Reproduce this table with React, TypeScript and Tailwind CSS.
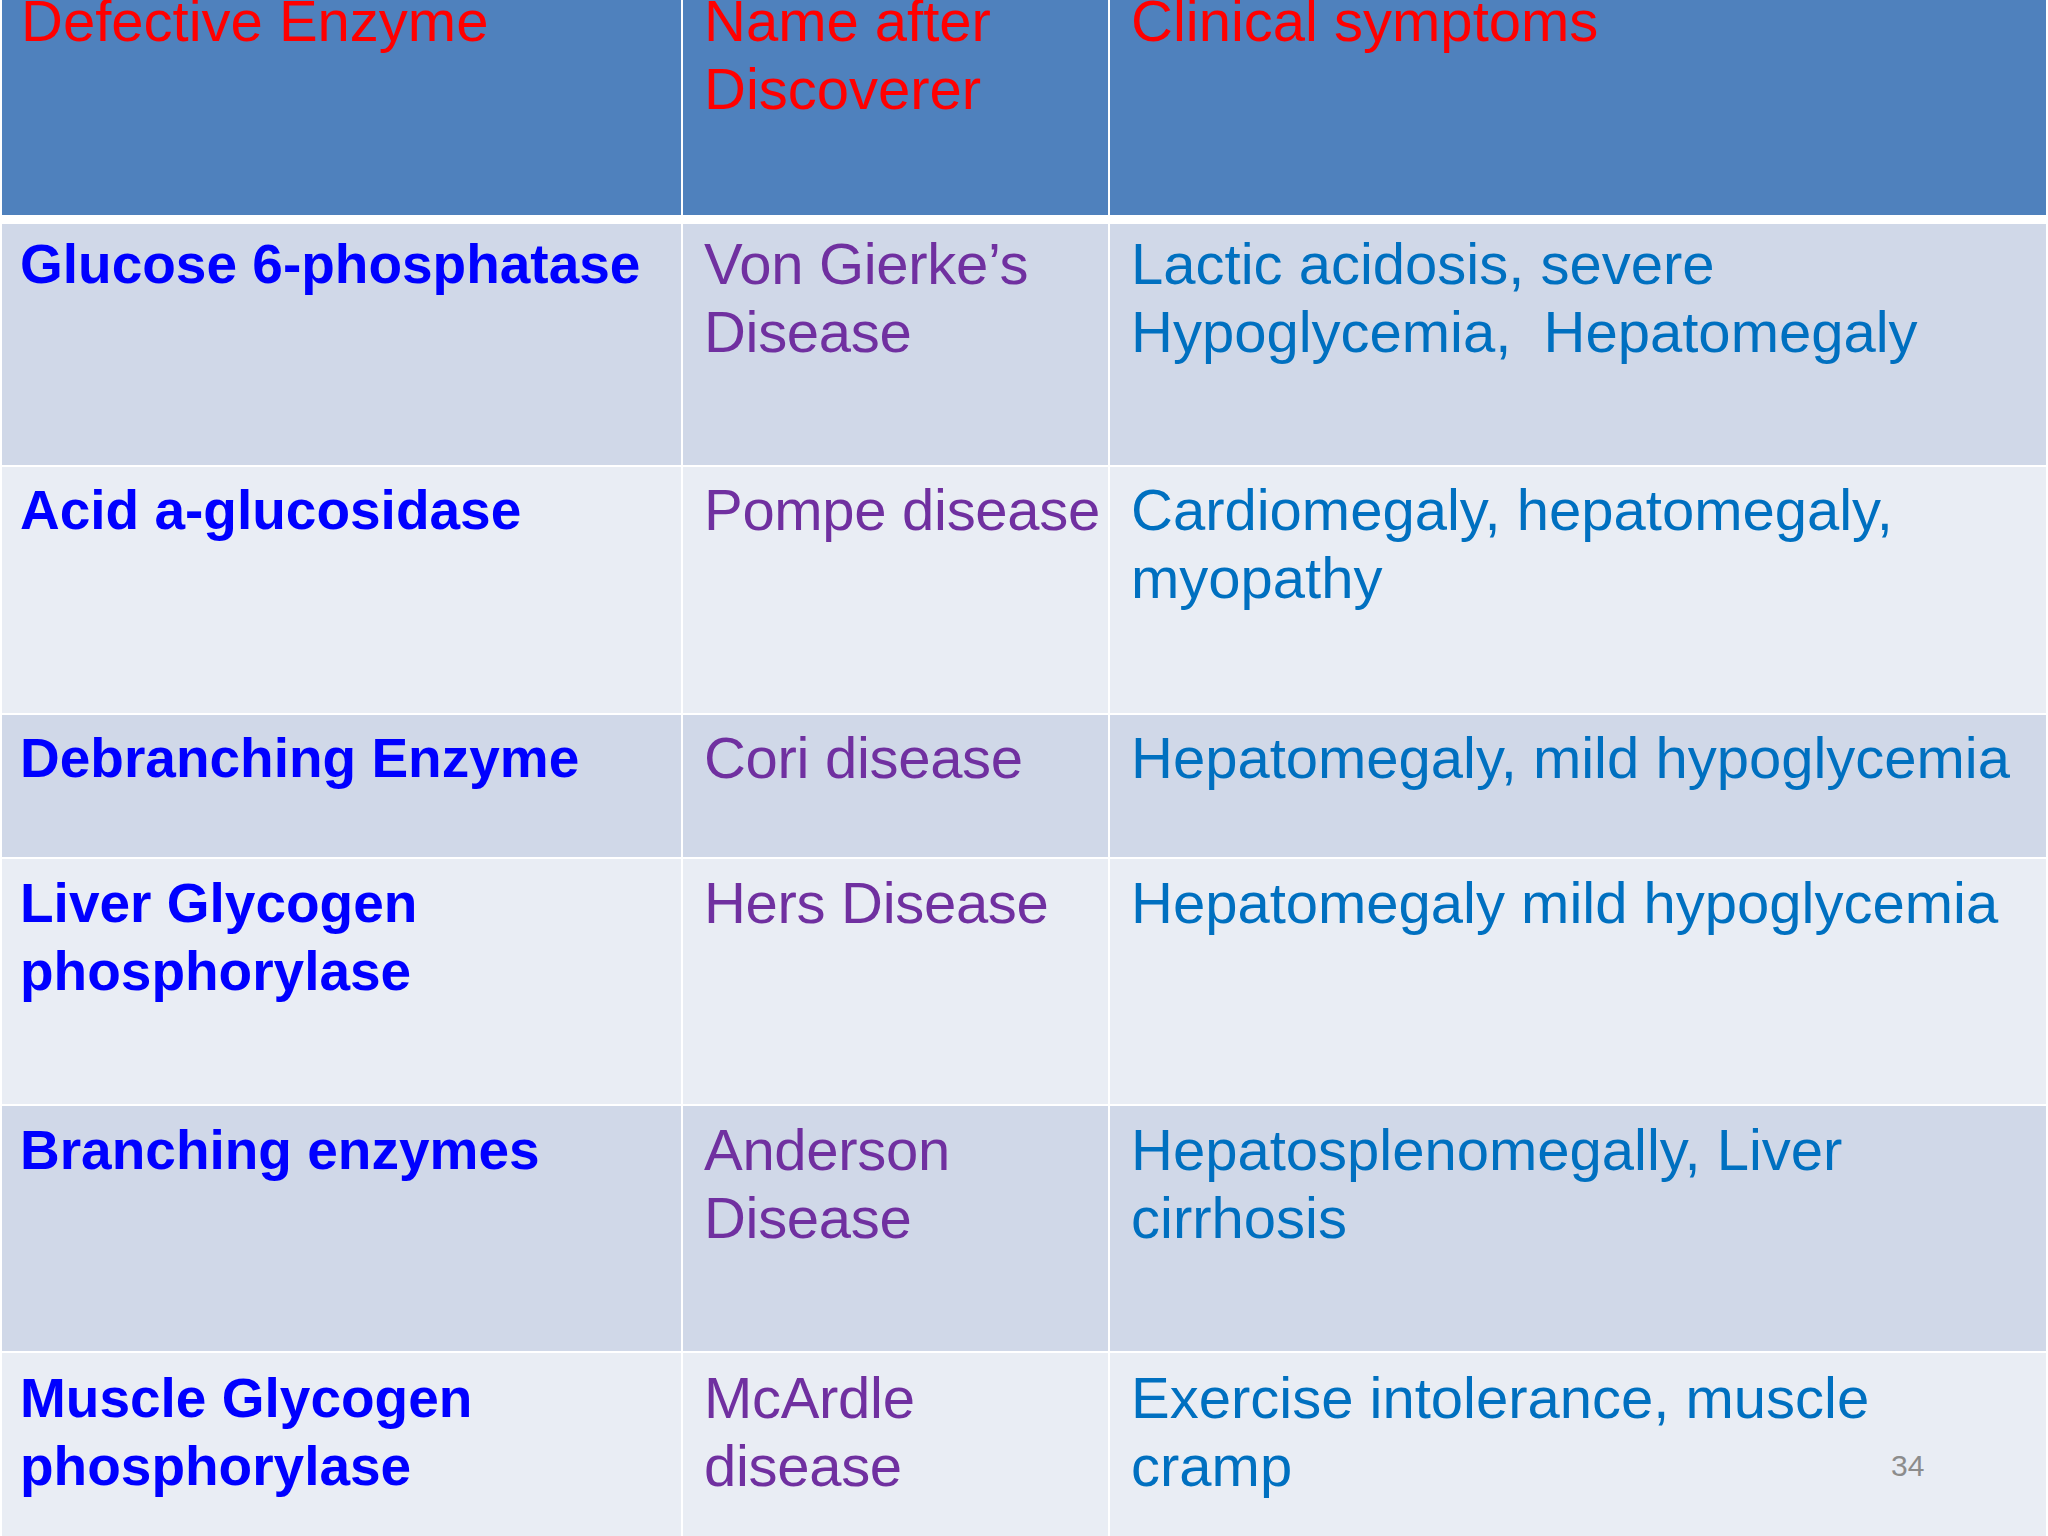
import React from "react";

type Row = {
  bg: string;
  h: string;
  pt: string;
  c1: string[];
  c2: string[];
  c3: string[];
};

const rows: Row[] = [
  {
    bg: "bg-[#d0d8e8]",
    h: "h-[241px]",
    pt: "pt-[6px]",
    c1: ["Glucose 6-phosphatase"],
    c2: ["Von Gierke’s", "Disease"],
    c3: ["Lactic acidosis, severe", "Hypoglycemia,  Hepatomegaly"],
  },
  {
    bg: "bg-[#e9edf4]",
    h: "h-[246px]",
    pt: "pt-[9px]",
    c1: ["Acid a-glucosidase"],
    c2: ["Pompe disease"],
    c3: ["Cardiomegaly, hepatomegaly,", "myopathy"],
  },
  {
    bg: "bg-[#d0d8e8]",
    h: "h-[142px]",
    pt: "pt-[9px]",
    c1: ["Debranching Enzyme"],
    c2: ["Cori disease"],
    c3: ["Hepatomegaly, mild hypoglycemia"],
  },
  {
    bg: "bg-[#e9edf4]",
    h: "h-[245px]",
    pt: "pt-[10px]",
    c1: ["Liver Glycogen", "phosphorylase"],
    c2: ["Hers Disease"],
    c3: ["Hepatomegaly mild hypoglycemia"],
  },
  {
    bg: "bg-[#d0d8e8]",
    h: "h-[245px]",
    pt: "pt-[10px]",
    c1: ["Branching enzymes"],
    c2: ["Anderson", "Disease"],
    c3: ["Hepatosplenomegally, Liver", "cirrhosis"],
  },
  {
    bg: "bg-[#e9edf4]",
    h: "h-[183px]",
    pt: "pt-[11px]",
    c1: ["Muscle Glycogen", "phosphorylase"],
    c2: ["McArdle", "disease"],
    c3: ["Exercise intolerance, muscle", "cramp"],
  },
];

function Lines({ lines }: { lines: string[] }) {
  return (
    <>
      {lines.map((l, i) => (
        <div key={i} className="whitespace-pre">
          {l}
        </div>
      ))}
    </>
  );
}

export default function App() {
  return (
    <div
      className="relative w-[2048px] h-[1536px] overflow-hidden bg-white pl-[2px]"
      style={{ fontFamily: '"Comic Sans MS", "Liberation Sans", Arial, sans-serif' }}
    >
      <div className="flex flex-col w-[2044px]">
        <div className="grid grid-cols-[679px_425px_936px] gap-x-[2px] h-[215px] overflow-hidden">
          <div className="bg-[#4f81bd] pl-[19px] text-[58px] leading-[68px] text-[#ff0000]">
            <div className="-mt-[13px]">
              <Lines lines={["Defective Enzyme"]} />
            </div>
          </div>
          <div className="bg-[#4f81bd] pl-[21px] text-[58px] leading-[68px] text-[#ff0000]">
            <div className="-mt-[13px]">
              <Lines lines={["Name after", "Discoverer"]} />
            </div>
          </div>
          <div className="bg-[#4f81bd] pl-[21px] text-[58px] leading-[68px] text-[#ff0000]">
            <div className="-mt-[13px]">
              <Lines lines={["Clinical symptoms"]} />
            </div>
          </div>
        </div>
        <div className="flex flex-col gap-y-[2px] mt-[9px]">
          {rows.map((r, i) => (
            <div
              key={i}
              className={`grid grid-cols-[679px_425px_936px] gap-x-[2px] ${r.h}`}
            >
              <div
                className={`${r.bg} ${r.pt} pl-[18px] text-[55px] leading-[68px] font-bold text-[#0000ff] overflow-hidden`}
              >
                <Lines lines={r.c1} />
              </div>
              <div
                className={`${r.bg} ${r.pt} pl-[21px] text-[58px] leading-[68px] text-[#7030a0] overflow-hidden tracking-[-0.3px]`}
              >
                <Lines lines={r.c2} />
              </div>
              <div
                className={`${r.bg} ${r.pt} pl-[21px] text-[58px] leading-[68px] text-[#0070c0] overflow-hidden`}
              >
                <Lines lines={r.c3} />
              </div>
            </div>
          ))}
        </div>
      </div>
      <div
        className="absolute left-[1891px] top-[1448px] text-[30px] leading-[36px] text-[#8c8c8c]"
        style={{ fontFamily: '"Liberation Sans", Arial, sans-serif' }}
      >
        34
      </div>
    </div>
  );
}
